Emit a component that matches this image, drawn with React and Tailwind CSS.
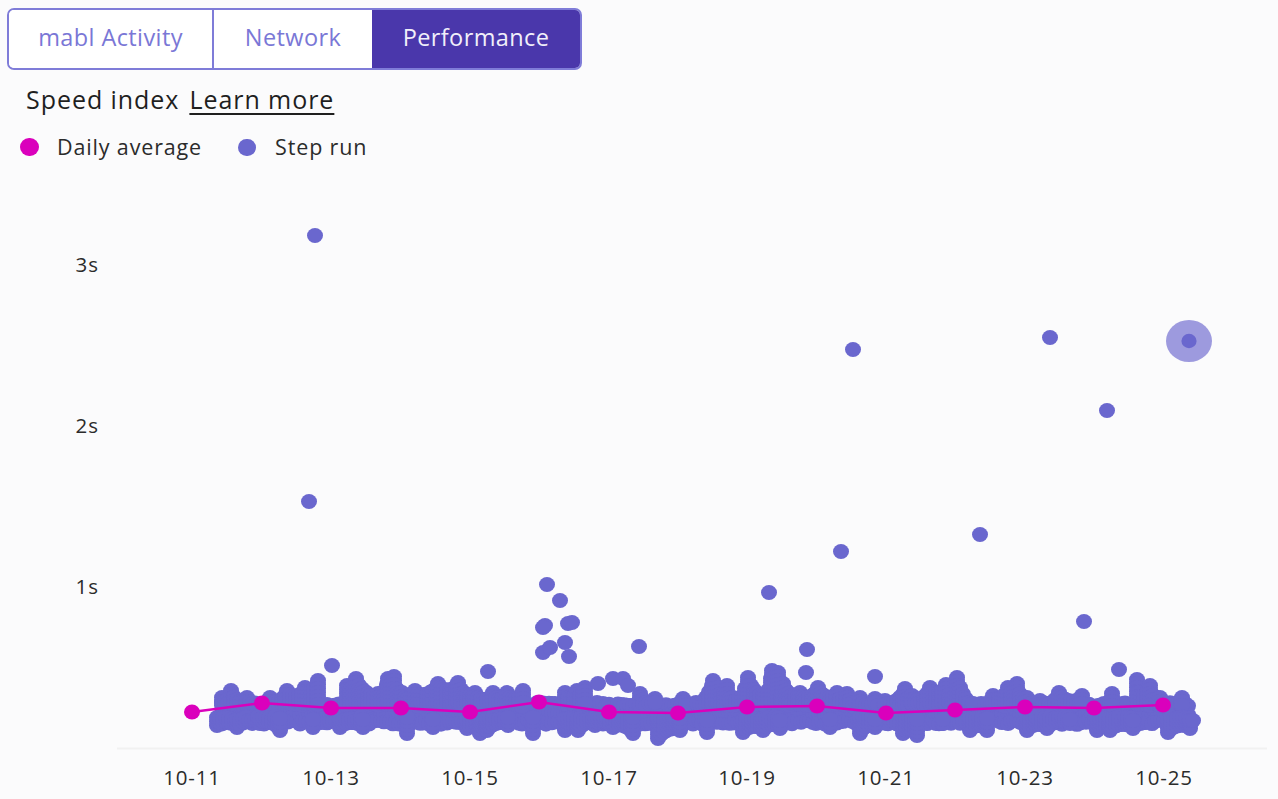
const top = [[231,690],[222,697],[247,697],[270,697],[287,690],[305,687],[318,680],[347,685],[356,678],[378,693],[388,678],[394,676],[402,692],[415,690],[438,683],[458,682],[475,692],[493,692],[507,692],[523,690],[565,692],[577,690],[585,687],[598,683],[613,678],[623,678],[628,685],[640,693],[655,698],[683,698],[697,703],[713,680],[718,687],[727,685],[733,697],[748,677],[745,688],[765,693],[772,670],[778,672],[783,683],[782,697],[800,692],[818,687],[837,692],[847,693],[860,697],[875,698],[885,700],[905,688],[912,695],[930,687],[946,684],[957,677],[955,695],[973,703],[993,695],[1008,687],[1017,683],[1027,697],[1040,700],[1059,692],[1082,695],[1112,693],[1137,679],[1150,685],[1138,692],[1160,697],[1182,697],[1188,707],[1192,718]];
const bottom = [[217,725],[237,727],[260,723],[280,730],[313,727],[340,727],[363,727],[407,733],[433,727],[467,728],[480,733],[487,730],[508,725],[533,733],[565,730],[578,730],[595,725],[613,727],[633,733],[658,738],[680,730],[707,732],[743,732],[763,730],[780,728],[830,727],[860,733],[875,727],[903,733],[917,735],[943,723],[970,730],[987,730],[1027,730],[1047,728],[1070,723],[1097,730],[1110,730],[1133,728],[1168,732],[1190,728],[1193,720]];
const floating = [[315,235],[309,501],[853,349],[1050,337],[1107,410],[841,551],[980,534],[769,592],[1084,621],[332,665],[488,671],[547,584],[560,600],[545,625],[543,627],[568,623],[572,622],[543,652],[550,647],[565,642],[569,656],[639,646],[807,649],[806,672],[875,676],[1119,669]];

let seed = 7;
const rnd = () => { seed = (seed * 16807) % 2147483647; return seed / 2147483647; };

const dots = [];
for (let x = 222; x <= 1190; x += 3) {
  const t = 702 + rnd() * 4;
  const b = 719 + rnd() * 5;
  dots.push([x, t], [x, (t + b) / 2], [x, b]);
}
const isGap = (x) => x >= 592 && x <= 630;
const sortedTop = [...top].sort((a, b) => a[0] - b[0]);
for (let i = 0; i < sortedTop.length; i++) {
  const [x, y] = sortedTop[i];
  if (isGap(x)) { dots.push([x, y]); continue; }
  for (let v = y; v < 706; v += 4) dots.push([x, v]);
  const next = sortedTop[i + 1];
  if (next && !isGap(next[0]) && next[0] - x <= 24) {
    for (let u = x + 3; u < next[0]; u += 3) {
      const f = (u - x) / (next[0] - x);
      const yy = y + (next[1] - y) * f + 3 + 4 * Math.sin(f * Math.PI);
      for (let v = yy; v < 706; v += 4) dots.push([u, v]);
    }
  }
}
const sortedBottom = [...bottom].sort((a, b) => a[0] - b[0]);
for (let i = 0; i < sortedBottom.length; i++) {
  const [x, y] = sortedBottom[i];
  for (let v = y; v > 716; v -= 4) dots.push([x, v]);
  const next = sortedBottom[i + 1];
  if (next && next[0] - x <= 24) {
    for (let u = x + 3; u < next[0]; u += 3) {
      const f = (u - x) / (next[0] - x);
      const yy = y + (next[1] - y) * f - 2 - 3 * Math.sin(f * Math.PI);
      for (let v = yy; v > 716; v -= 4) dots.push([u, v]);
    }
  }
}
for (const d of floating) dots.push(d);

const avg = [[192,712],[262,703],[331,708],[401,708],[470,712],[539,702],[609,712],[678,713],[747,707],[817,706],[886,713],[955,710],[1025,707],[1094,708],[1163,705]];
const xLabels = [["10-11",192],["10-13",331],["10-15",470],["10-17",609],["10-19",747],["10-21",886],["10-23",1025],["10-25",1164]];
const yLabels = [["3s",264],["2s",425],["1s",586]];

const font = "font-['Open_Sans','Noto_Sans',sans-serif]";

function Chart() {
  return (
    <svg viewBox="0 170 1278 629" className="block w-[1278px] h-[629px]">
      <line x1="117" x2="1267" y1="748.5" y2="748.5" stroke="#f1f1f1" strokeWidth="2" />
      {yLabels.map(([t, y]) => (
        <text key={t} x="99" y={y} dominantBaseline="central" textAnchor="end" fontSize="20.5" letterSpacing="1" fill="#2b2b2b">{t}</text>
      ))}
      {xLabels.map(([t, x]) => (
        <text key={t} x={x} y="777" dominantBaseline="central" textAnchor="middle" fontSize="20.5" letterSpacing="0.8" fill="#2b2b2b">{t}</text>
      ))}
      <ellipse cx="1189" cy="341" rx="23" ry="21" fill="#9d9ade" />
      <ellipse cx="1189" cy="341" rx="7.6" ry="7.2" fill="#6a67ce" />
      <g fill="#6a67ce">
        {dots.map(([x, y], i) => <ellipse key={i} cx={x} cy={y + 0.5} rx="8" ry="7.4" />)}
      </g>
      <polyline points={avg.map(p => p.join(",")).join(" ")} fill="none" stroke="#da00bc" strokeWidth="2.5" />
      <g fill="#da00bc">
        {avg.map(([x, y]) => <ellipse key={x} cx={x} cy={y} rx="8" ry="7.5" />)}
      </g>
    </svg>
  );
}

export default function App() {
  return (
    <div className={`w-[1278px] h-[799px] overflow-hidden bg-[#fbfbfc] ${font}`}>
      <div className="pl-[7px] pt-[8px]">
        <div className="flex w-[575px] h-[62px] rounded-[7px] border-2 border-[#7f7cd8] overflow-hidden text-[23.5px] leading-[30px] tracking-[0.4px]">
          <div className="w-[205px] flex items-center justify-center pb-[4px] bg-white text-[#7a77d6] border-r-2 border-[#7f7cd8]">mabl Activity</div>
          <div className="w-[158px] flex items-center justify-center pb-[4px] bg-white text-[#7a77d6]">Network</div>
          <div className="flex-1 flex items-center justify-center pb-[4px] bg-[#4a37ab] text-[#f1effa]">Performance</div>
        </div>
      </div>
      <div className="flex pl-[26px] mt-[14px] h-[32px] items-center gap-[10px] text-[25px] tracking-[0.95px] text-[#1f1f1f]">
        <span>Speed index</span>
        <span className="underline underline-offset-4">Learn more</span>
      </div>
      <div className="flex items-center pl-[20px] mt-[16px] h-[30px] text-[21.5px] tracking-[0.85px] text-[#2b2b2b]">
        <span className="w-[19px] h-[18px] rounded-full bg-[#da00bc]" />
        <span className="ml-[18px]">Daily average</span>
        <span className="ml-[36px] w-[18px] h-[17px] rounded-full bg-[#6a67ce]" />
        <span className="ml-[19px]">Step run</span>
      </div>
      <div className="mt-[8px]">
        <Chart />
      </div>
    </div>
  );
}
